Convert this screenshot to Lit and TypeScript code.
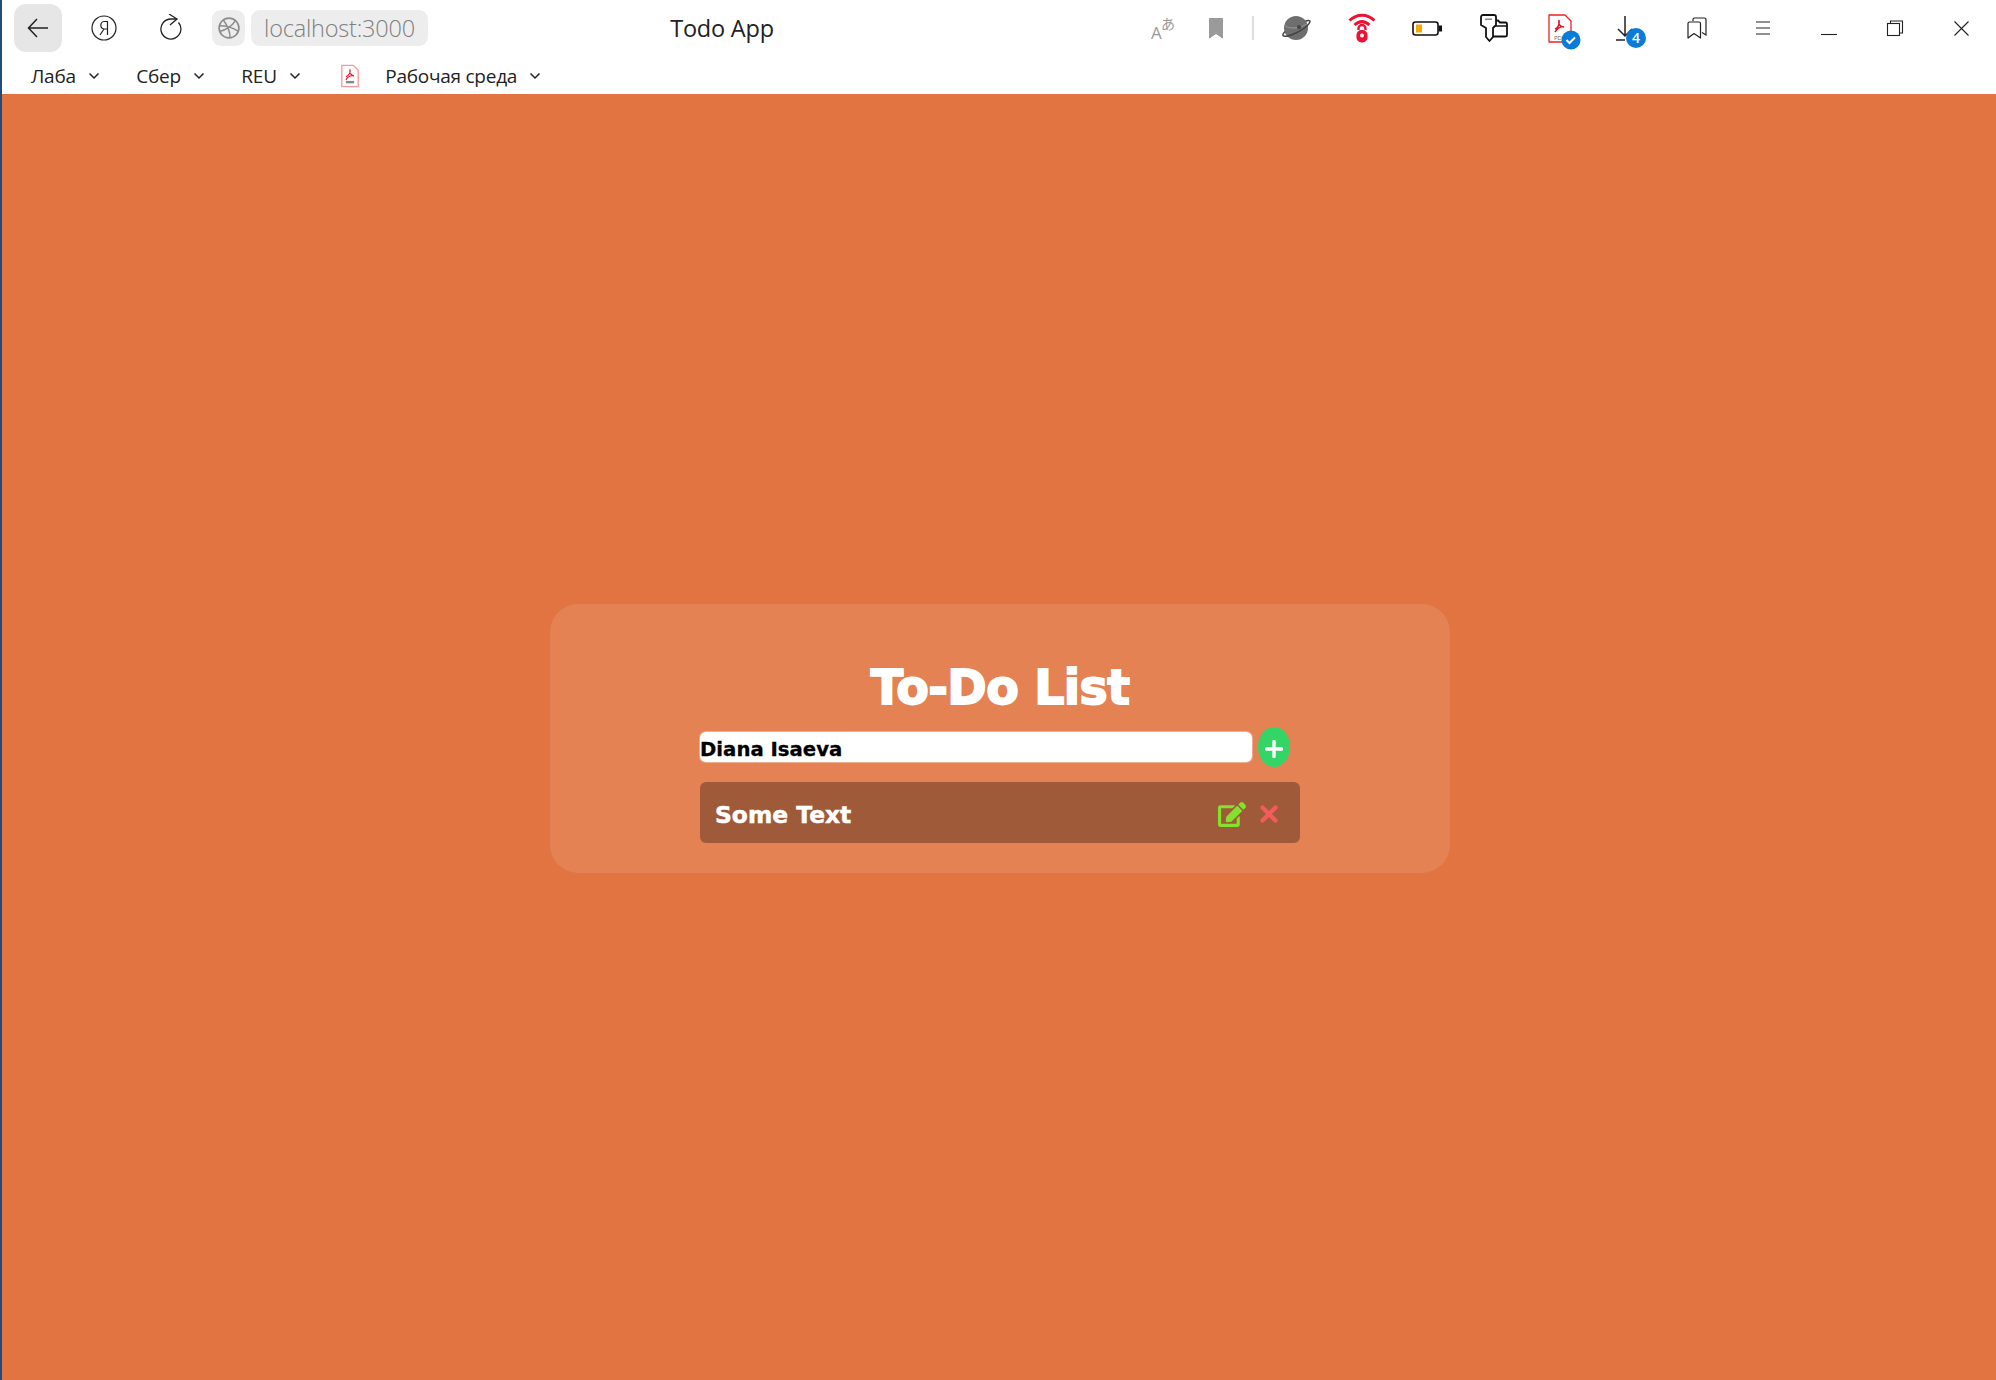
import { LitElement, html, css, svg } from "lit";
import { customElement } from "lit/decorators.js";

const chevron = html`<svg class="chev" width="12" height="8" viewBox="0 0 12 8"><path d="M1.500 1.500 6 6l4.500-4.500" fill="none" stroke="#222" stroke-width="1.500"/></svg>`;

const pdfGlyph = svg`
  <svg width="18" height="24" viewBox="0 0 22 28">
    <path d="M1 1h14l6 6v20H1z" fill="#fff" stroke="#f59a9a" stroke-width="1.600" stroke-linejoin="round"/>
    <path d="M6 15c3-1 6-5 5-9-1 4 1 7 5 8-4-1-8 1-10 5" fill="none" stroke="#e81123" stroke-width="1.300"/>
    <rect x="6" y="20" width="10" height="3" fill="#888"/>
  </svg>`;

const rightIcons = [
  { w: 82, c: "", t: svg`<svg width="30" height="26" viewBox="0 0 30 26"><text x="3" y="24" font-family="Open Sans" font-size="17" fill="#9a9a9a">A</text><text x="13" y="14" font-family="Noto Sans CJK JP" font-size="14" fill="#9a9a9a">あ</text></svg>` },
  { w: 24, c: "", t: svg`<svg width="16" height="22" viewBox="0 0 16 22"><path d="M1.500 1.500h13v19.500L8 16.500 1.500 21z" fill="#9a9a9a" stroke="#9a9a9a" stroke-linejoin="round"/></svg>` },
  { w: 50, c: "", t: svg`<svg width="2" height="24" viewBox="0 0 2 24"><rect width="2" height="24" fill="#dedede"/></svg>` },
  { w: 36, c: "", t: svg`<svg width="28" height="26" viewBox="0 0 28 26"><circle cx="14" cy="13" r="12" fill="#6e6e6e"/><path d="M3 11c5 3 14 3 22-2" fill="none" stroke="#8e8e8e" stroke-width="1.400"/><path d="M23.500 6c3-1 4.500-.5 4.500.5 0 2-5.500 7.500-13 11S2 22 1 20.500c-.4-1 1-3 2-4" fill="none" stroke="#444" stroke-width="1.500"/><circle cx="17" cy="12" r="2" fill="#444"/></svg>` },
  { w: 96, c: "", t: svg`<svg width="28" height="32" viewBox="0 0 28 32"><path d="M1.500 8.500C9 1.500 19 1.500 26.500 8.500M6.500 13c5-4.500 10-4.500 15 0" fill="none" stroke="#ee1133" stroke-width="3"/><path d="M10.500 18v-1.500a3.500 3.500 0 0 1 7 0V18" fill="none" stroke="#ee1133" stroke-width="2.400"/><rect x="8.500" y="18" width="11" height="12.500" rx="5" fill="#ee1133"/><circle cx="14" cy="23.500" r="2" fill="#fff"/></svg>` },
  { w: 34, c: "", t: svg`<svg width="30" height="15" viewBox="0 0 30 15"><rect x="1" y="1" width="25" height="13" rx="2.500" fill="#fff" stroke="#111" stroke-width="1.600"/><rect x="4" y="3.500" width="6" height="8" fill="#f9a800"/><rect x="26.500" y="4.500" width="3.500" height="6" fill="#111"/></svg>` },
  { w: 99, c: "", t: svg`<svg width="28" height="28" viewBox="0 0 28 28"><path d="M13 6.500h5l2 2h5.500a1.500 1.500 0 0 1 1.500 1.500v11a1.500 1.500 0 0 1-1.500 1.500H12" fill="#fff" stroke="#111" stroke-width="1.800"/><path d="M14 12h13" stroke="#111" stroke-width="1.500"/><path d="M1 3a2 2 0 0 1 2-2h11a2 2 0 0 1 2 2v8l-3 3v9l-3.500 4L6 23v-9l-5-3z" fill="#fff" stroke="#111" stroke-width="1.800" stroke-linejoin="round"/><rect x="5" y="4.500" width="7" height="1.500" fill="#888"/></svg>` },
  { w: 43, c: "pdfi", t: svg`<svg width="34" height="36" viewBox="0 0 34 36"><path d="M1 1h16l6 6v21H1z" fill="#fff" stroke="#f02020" stroke-width="1.300" stroke-linejoin="round"/><path d="M7 15c3-1 5-5 4-9-1 4 1 7 5 7-4-1-7 2-9 5" fill="none" stroke="#e81123" stroke-width="1.400"/><text x="6" y="26" font-family="Open Sans" font-size="6" fill="#666">PDF</text><circle cx="23" cy="26" r="9.500" fill="#0a7cd8"/><path d="M18.500 26l3 3 5.500-5.500" fill="none" stroke="#fff" stroke-width="2"/></svg>` },
  { w: 90, c: "dl", t: svg`<svg width="32" height="34" viewBox="0 0 32 34"><path d="M10 1v20M3 14l7 7 7-7M1 25h9" fill="none" stroke="#222" stroke-width="1.500"/><circle cx="21" cy="23" r="10" fill="#0a7cd8"/><text x="21" y="28" text-anchor="middle" font-family="Open Sans" font-weight="600" font-size="14" fill="#fff">4</text></svg>` },
  { w: 42, c: "", t: svg`<svg width="20" height="22" viewBox="0 0 20 22"><path d="M6 4V2.500A1.500 1.500 0 0 1 7.500 1h10A1.500 1.500 0 0 1 19 2.500V18l-4-2.500" fill="none" stroke="#222" stroke-width="1.200"/><path d="M1 6.500A1.500 1.500 0 0 1 2.500 5H12a1.500 1.500 0 0 1 1.500 1.500V21L7 16.500 1 21z" fill="#fff" stroke="#222" stroke-width="1.200" stroke-linejoin="round"/></svg>` },
  { w: 90, c: "", t: svg`<svg width="14" height="14" viewBox="0 0 14 14"><path d="M0 1h14M0 7h14M0 13h14" stroke="#222" stroke-width="1.100"/></svg>` },
  { w: 42, c: "", t: svg`<svg width="16" height="14" viewBox="0 0 16 14"><path d="M0 13.500h16" stroke="#222" stroke-width="1.100"/></svg>` },
  { w: 90, c: "", t: svg`<svg width="16" height="16" viewBox="0 0 16 16"><path d="M3.500 3V1h12v12h-3" fill="none" stroke="#222" stroke-width="1.100"/><rect x=".5" y="3.500" width="12" height="12" fill="#fff" stroke="#222" stroke-width="1.100"/></svg>` },
  { w: 42, c: "", t: svg`<svg width="15" height="15" viewBox="0 0 15 15"><path d="M.5.5l14 14M14.500.5l-14 14" stroke="#222" stroke-width="1.100"/></svg>` },
];

@customElement("app-root")
export class AppRoot extends LitElement {
  static styles = css`
    :host { display: block; width: 1996px; height: 1380px; overflow: hidden; background: #e17440; font-family: "Open Sans", sans-serif; }
    .page { display: flex; flex-direction: column; height: 1380px; border-left: 2px solid #234a78; box-sizing: border-box; }
    .chrome { background: #fff; height: 94px; flex: none; display: flex; flex-direction: column; }
    .toolbar { height: 52px; display: flex; align-items: center; padding-top: 4px; box-sizing: border-box; }
    .nav { display: flex; align-items: center; width: 1120px; flex: none; }
    .back { width: 48px; height: 48px; margin-left: 12px; border-radius: 12px; background: #e6e6e6; display: flex; align-items: center; justify-content: center; }
    .navicon { width: 58px; display: flex; justify-content: center; }
    .ya { margin-left: 13px; }
    .reload { margin-left: 8px; }
    .site { width: 33px; height: 36px; margin-left: 13px; border-radius: 9px; background: #ededed; display: flex; align-items: center; justify-content: center; }
    .url { height: 36px; width: 177px; margin-left: 6px; border-radius: 9px; background: #ededed; color: #808080; font-size: 23.5px; font-weight: 300; display: flex; align-items: center; justify-content: center; box-sizing: border-box; letter-spacing: -0.2px; }
    .title { font-size: 23.5px; color: #222; width: 176px; margin-left: 206px; text-align: center; flex: none; letter-spacing: -0.2px; }
    .icons { display: flex; align-items: center; flex: none; }
    .slot { display: flex; align-items: center; justify-content: center; height: 48px; flex: none; }
    .slot svg { overflow: visible; }
    .pdfi { padding-top: 8px; box-sizing: border-box; }
    .dl { padding-top: 8px; box-sizing: border-box; }
    .marks { height: 42px; display: flex; align-items: center; padding: 6px 0 0 29px; box-sizing: border-box; font-size: 19px; color: #222; letter-spacing: -0.25px; }
    .mark { display: flex; align-items: center; gap: 12px; margin-right: 36.5px; }
    .pdf { display: flex; margin-right: 26px; margin-left: 4px; }
    .main { flex: 1; display: flex; align-items: center; justify-content: center; padding-left: 2px; padding-bottom: 1px; }
    .card { width: 900px; height: 269px; box-sizing: border-box; background: rgba(255, 255, 255, 0.1); border-radius: 28px; padding: 50px 150px 30px; display: flex; flex-direction: column; align-items: stretch; margin-top: 3px; }
    h1 { margin: 0; color: #fff; font-family: "DejaVu Sans", sans-serif; font-weight: 700; font-size: 47.5px; line-height: 67px; height: 73px; text-align: center; -webkit-text-stroke: 1.8px #fff; letter-spacing: -0.6px; }
    .row { display: flex; align-items: center; gap: 6px; height: 40px; }
    input { width: 552px; height: 30px; box-sizing: border-box; border: 0; outline: 0; padding: 6px 0 0; border-radius: 6px; background: #fff; color: #000; font-family: "DejaVu Sans", sans-serif; font-weight: 700; font-size: 19.7px; -webkit-text-stroke: 0.3px #000; box-shadow: 0 0 0 1px rgba(255,255,255,.35); }
    .add { width: 32px; height: 40px; border-radius: 50%; border: 0; padding: 4px 0 0; background: #34d567; display: flex; align-items: center; justify-content: center; }
    .item { margin-top: 15px; height: 61px; border-radius: 6px; background: rgba(0, 0, 0, 0.3); display: flex; align-items: center; padding: 4px 22px 0 15px; box-sizing: border-box; color: #fff; font-family: "DejaVu Sans", sans-serif; font-weight: 700; font-size: 23.4px; -webkit-text-stroke: 0.5px #fff; }
    .item span { flex: 1; padding-top: 2px; }
    .actions { display: flex; align-items: center; gap: 14px; }
  `;

  render() {
    return html`
      <div class="page">
        <div class="chrome">
          <div class="toolbar">
            <div class="nav">
              <div class="back">
                <svg width="22" height="20" viewBox="0 0 22 20"><path d="M21 10H1.500M10 1 1.500 10l8.500 9" fill="none" stroke="#222" stroke-width="1.500"/></svg>
              </div>
              <div class="navicon ya">
                <svg width="26" height="26" viewBox="0 0 26 26"><circle cx="13" cy="13" r="12" fill="none" stroke="#222" stroke-width="1.200"/><path d="M16.500 20V6.500h-3.500a3.800 3.800 0 0 0 0 7.500h3.500M13 14 9 20" fill="none" stroke="#222" stroke-width="1.200"/></svg>
              </div>
              <div class="navicon reload">
                <svg width="24" height="28" viewBox="0 0 24 28"><path d="M20.500 8.500A10 10 0 1 1 13 5h6" fill="none" stroke="#222" stroke-width="1.300"/><path d="M11 0l8 5-7 6" fill="none" stroke="#222" stroke-width="1.300"/></svg>
              </div>
              <div class="site">
                <svg width="22" height="22" viewBox="0 0 20 20"><circle cx="10" cy="10" r="9" fill="none" stroke="#8c8c8c" stroke-width="1.500"/><path d="M2 13c5-1 11-5 14-10M5 3c3 4 6 10 6 16M1.500 8c5 0 11 1 17 5" fill="none" stroke="#8c8c8c" stroke-width="1.300"/></svg>
              </div>
              <div class="url">localhost:3000</div>
              <div class="title">Todo App</div>
            </div>
            <div class="icons">
              ${rightIcons.map((i) => html`<div class="slot ${i.c}" style="width:${i.w}px">${i.t}</div>`)}
            </div>
          </div>
          <div class="marks">
            <div class="mark">Лаба ${chevron}</div>
            <div class="mark">Сбер ${chevron}</div>
            <div class="mark">REU ${chevron}</div>
            <div class="pdf">${pdfGlyph}</div>
            <div class="mark">Рабочая среда ${chevron}</div>
          </div>
        </div>
        <div class="main">
          <div class="card">
            <h1>To-Do List</h1>
            <div class="row">
              <input type="text" .value=${"Diana Isaeva"} />
              <button class="add" aria-label="Add">
                <svg width="18" height="18" viewBox="0 0 18 18"><path d="M9 1.500v15M1.500 9h15" stroke="#fff" stroke-width="3.400" stroke-linecap="round"/></svg>
              </button>
            </div>
            <div class="item">
              <span>Some Text</span>
              <div class="actions">
                <svg width="28" height="25" viewBox="0 0 576 512"><path fill="#84e22e" d="M402.600 83.200l90.200 90.200c3.800 3.800 3.800 10 0 13.800L274.400 405.600l-92.800 10.300c-12.400 1.400-22.900-9.100-21.500-21.500l10.300-92.800L388.800 83.200c3.800-3.800 10-3.800 13.800 0zm162-22.900l-48.800-48.800c-15.200-15.200-39.900-15.200-55.200 0l-35.400 35.400c-3.800 3.800-3.800 10 0 13.800l90.200 90.200c3.800 3.800 10 3.800 13.800 0l35.400-35.400c15.200-15.300 15.200-40 0-55.200zM384 346.200V448H64V128h229.800c3.200 0 6.200-1.300 8.500-3.500l40-40c7.600-7.600 2.200-20.500-8.500-20.500H48C21.500 64 0 85.500 0 112v352c0 26.500 21.500 48 48 48h352c26.500 0 48-21.500 48-48V306.200c0-10.700-12.900-16-20.500-8.500l-40 40c-2.200 2.300-3.500 5.300-3.500 8.500z"/></svg>
                <svg width="18" height="18" viewBox="0 0 18 18"><path d="M2.500 2.500l13 13M15.500 2.500l-13 13" stroke="#f45b5b" stroke-width="4.200" stroke-linecap="round"/></svg>
              </div>
            </div>
          </div>
        </div>
      </div>
    `;
  }
}
